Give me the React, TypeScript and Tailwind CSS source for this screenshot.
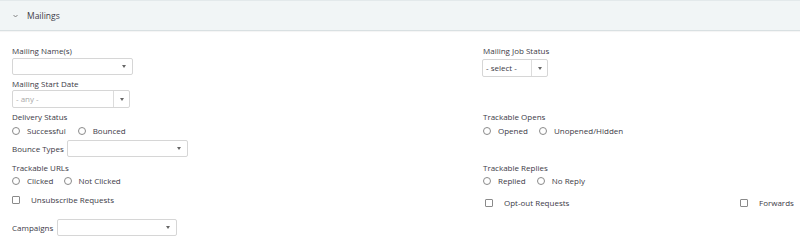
import React from 'react'

function Caret() {
  return <span className="w-0 h-0 border-x-[2.5px] border-x-transparent border-t-[3px] border-t-[#666]" />
}

function Select({ width, text, placeholder }: { width: string; text?: string; placeholder?: boolean }) {
  return (
    <div className={`${width} h-[17px] border border-[#d6d6d6] rounded-[2px] bg-white flex items-center pl-[3px] pr-[6px]`}>
      <span className={`flex-1 ${placeholder ? 'text-[#a9a9a9]' : ''}`}>{text}</span>
      <Caret />
    </div>
  )
}

function SplitSelect({ width, text, placeholder }: { width: string; text: string; placeholder?: boolean }) {
  return (
    <div className={`${width} h-[18px] border border-[#d6d6d6] rounded-[2px] bg-white flex items-stretch`}>
      <span className={`flex-1 flex items-center pl-[3px] border-r border-[#dcdcdc] ${placeholder ? 'text-[#a9a9a9]' : ''}`}>
        {text}
      </span>
      <span className="w-[15px] flex items-center justify-center">
        <Caret />
      </span>
    </div>
  )
}

function Radio({ label, className = '' }: { label: string; className?: string }) {
  return (
    <label className={`flex items-center ${className}`}>
      <span className="w-[8px] h-[8px] rounded-full border border-[#8a8a8a] bg-white" />
      <span className="ml-[7px]">{label}</span>
    </label>
  )
}

function Check({ label, className = '' }: { label: string; className?: string }) {
  return (
    <label className={`flex items-center ${className}`}>
      <span className="w-[8px] h-[8px] rounded-[1px] border border-[#8a8a8a] bg-white" />
      <span className="ml-[11px]">{label}</span>
    </label>
  )
}

export default function App() {
  return (
    <div className="w-[800px] h-[245px] bg-white text-[#3c3a46] text-[8px] leading-[10px] font-medium font-['Open_Sans',sans-serif] overflow-hidden">
      {/* accordion header */}
      <div className="h-[31px] bg-[#f1f5f6] border-t border-t-[#e3e9eb] border-b border-b-[#d9e0e2] shadow-[0_1px_1px_rgba(0,0,0,0.04)] flex items-center pl-[13px]">
        <svg width="5" height="4" viewBox="0 0 5 4" className="mt-[1px]">
          <polyline points="0.5,1 2.5,3 4.5,1" fill="none" stroke="#777" strokeWidth="0.9" />
        </svg>
        <span className="ml-[9px] text-[8.5px]">Mailings</span>
      </div>

      <div className="pl-[12px] pt-[15px]">
        {/* row 1 */}
        <div className="flex">
          <div className="w-[471px]">
            <div>Mailing Name(s)</div>
            <div className="mt-[2px]">
              <Select width="w-[121px]" />
            </div>
            <div className="mt-[4px]">Mailing Start Date</div>
            <div className="mt-[1px]">
              <SplitSelect width="w-[118px]" text="- any -" placeholder />
            </div>
          </div>
          <div>
            <div>Mailing Job Status</div>
            <div className="mt-[3px] -ml-[1px]">
              <SplitSelect width="w-[66px]" text="- select -" />
            </div>
          </div>
        </div>

        {/* row 2 */}
        <div className="flex mt-[4px]">
          <div className="w-[471px]">
            <div>Delivery Status</div>
            <div className="flex items-center h-[12px] mt-[3px]">
              <Radio label="Successful" />
              <Radio label="Bounced" className="ml-[12px]" />
            </div>
          </div>
          <div>
            <div>Trackable Opens</div>
            <div className="flex items-center h-[12px] mt-[3px]">
              <Radio label="Opened" />
              <Radio label="Unopened/Hidden" className="ml-[11px]" />
            </div>
          </div>
        </div>

        {/* row 3 */}
        <div className="flex items-center mt-[3px] gap-[3px]">
          <span>Bounce Types</span>
          <Select width="w-[121px]" />
        </div>

        {/* row 4 */}
        <div className="flex mt-[6px]">
          <div className="w-[471px]">
            <div>Trackable URLs</div>
            <div className="flex items-center h-[12px] mt-[2px]">
              <Radio label="Clicked" />
              <Radio label="Not Clicked" className="ml-[10px]" />
            </div>
          </div>
          <div>
            <div>Trackable Replies</div>
            <div className="flex items-center h-[12px] mt-[2px]">
              <Radio label="Replied" />
              <Radio label="No Reply" className="ml-[11px]" />
            </div>
          </div>
        </div>

        {/* row 5 */}
        <div className="flex mt-[7px] h-[12px]">
          <div className="w-[471px] flex items-center">
            <Check label="Unsubscribe Requests" />
          </div>
          <div className="flex items-center pt-[6px] pl-[2px]">
            <Check label="Opt-out Requests" className="w-[256px]" />
            <Check label="Forwards" className="-ml-[1px]" />
          </div>
        </div>

        {/* row 6 */}
        <div className="flex items-center mt-[13px] gap-[4px]">
          <span>Campaigns</span>
          <Select width="w-[120px]" />
        </div>
      </div>
    </div>
  )
}
